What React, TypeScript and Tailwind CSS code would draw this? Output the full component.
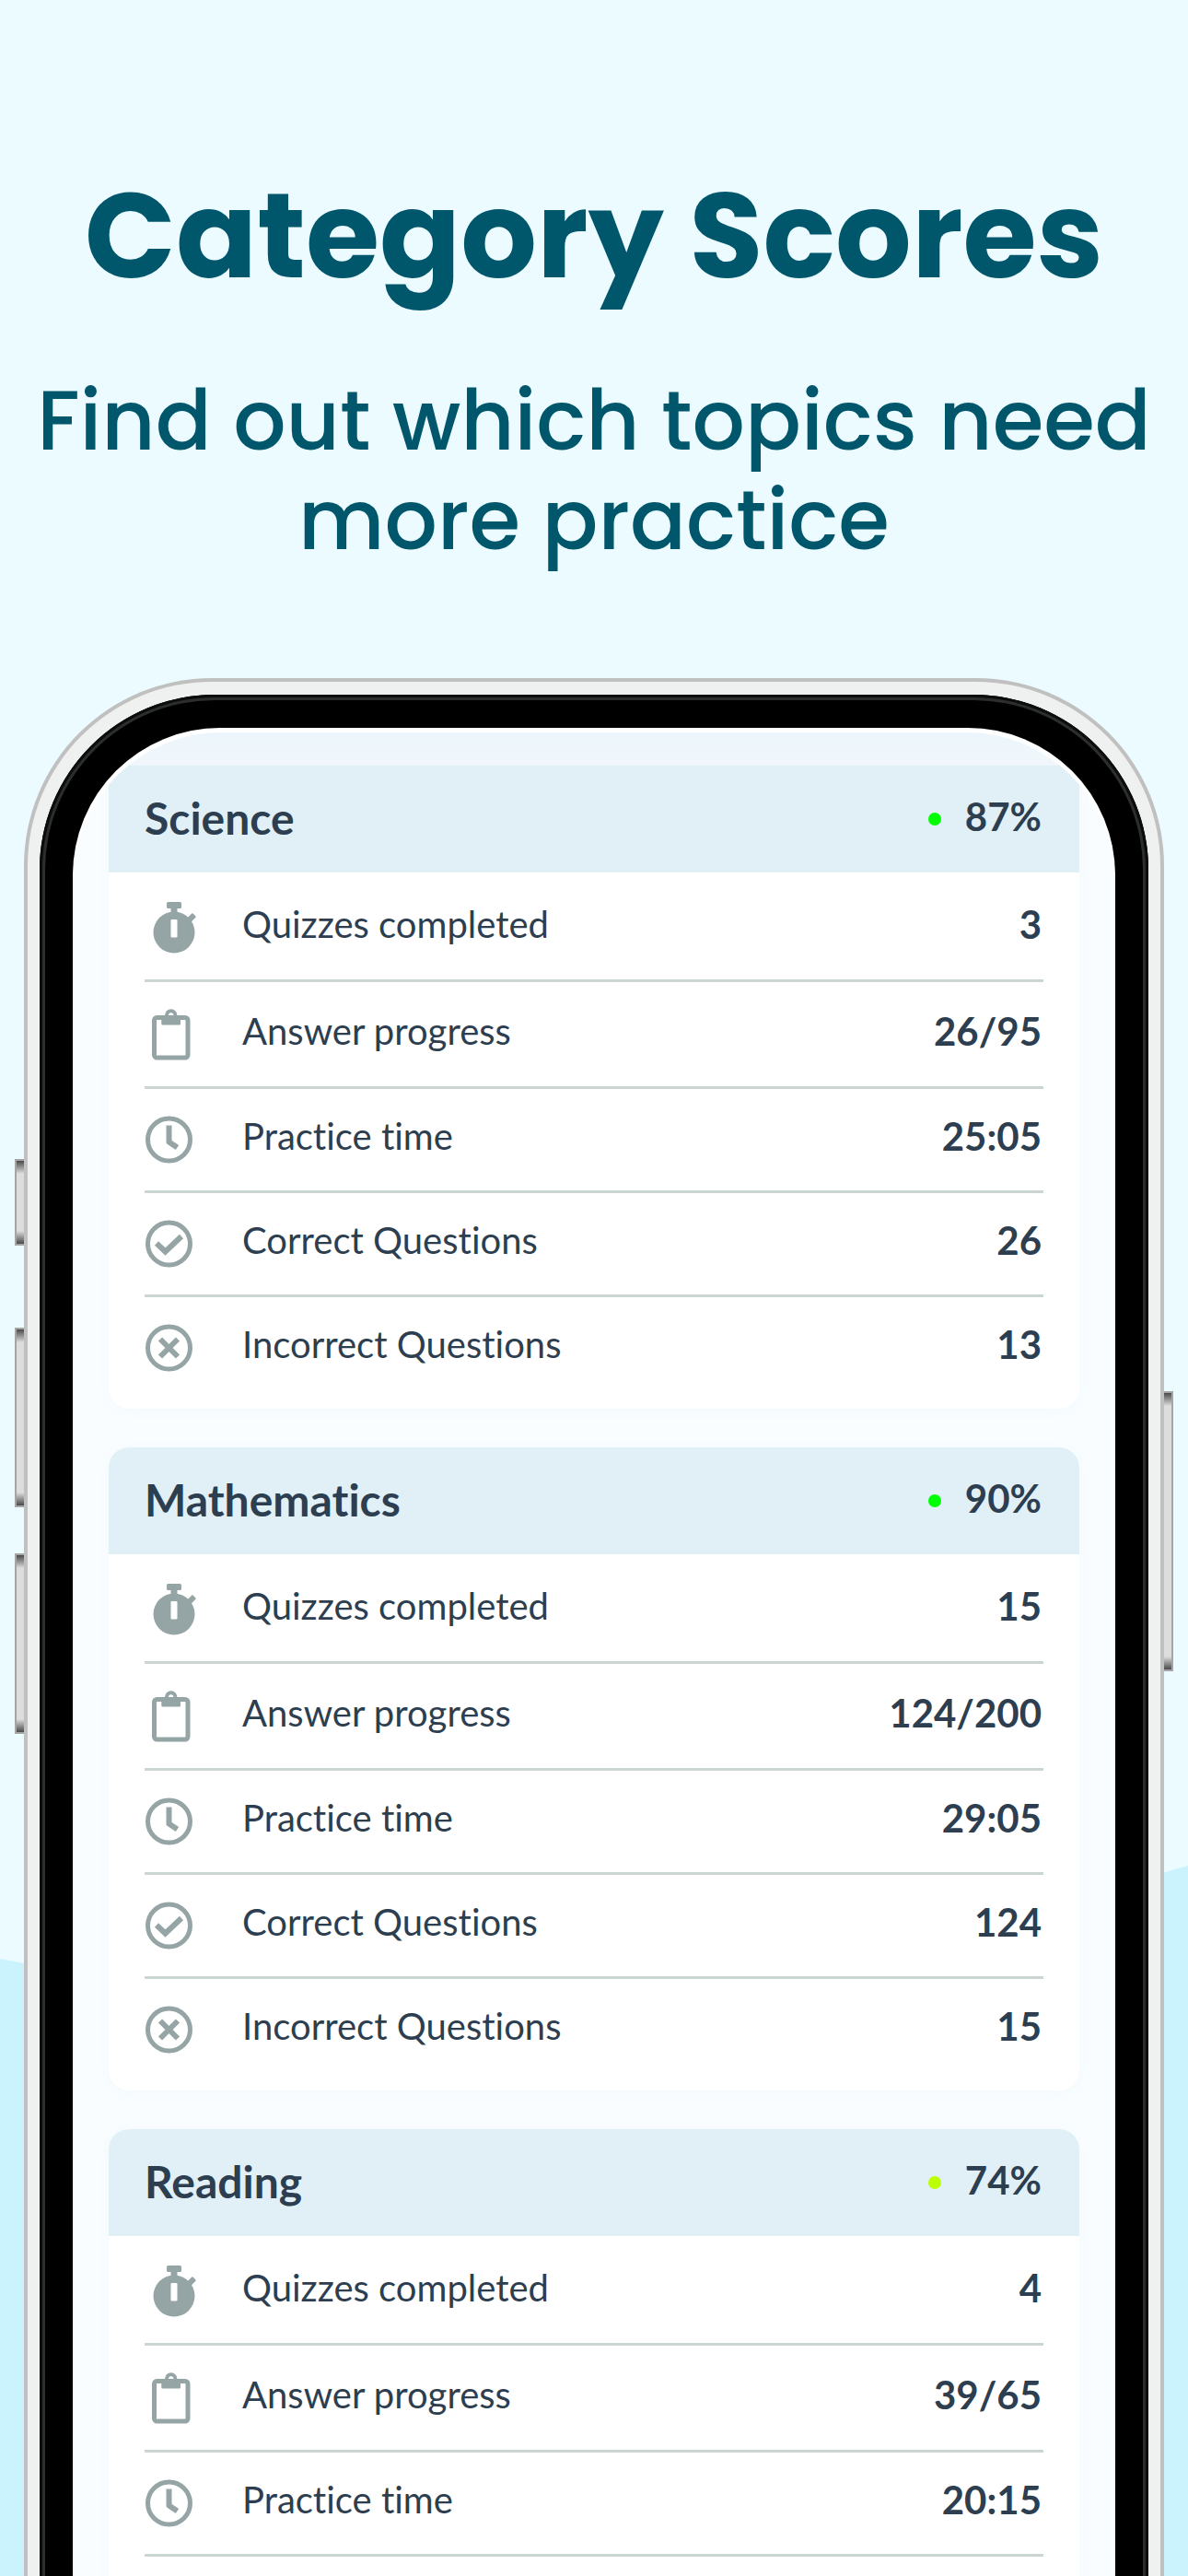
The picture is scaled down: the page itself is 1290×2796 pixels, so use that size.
import clsx from "clsx";

type StatKind = "quizzes" | "progress" | "time" | "correct" | "incorrect";

interface Stat {
  kind: StatKind;
  value: string;
}

interface Category {
  name: string;
  score: string;
  dot: string;
  stats: Stat[];
}

const LABELS: Record<StatKind, string> = {
  quizzes: "Quizzes completed",
  progress: "Answer progress",
  time: "Practice time",
  correct: "Correct Questions",
  incorrect: "Incorrect Questions",
};

const CATEGORIES: Category[] = [
  {
    name: "Science",
    score: "87%",
    dot: "bg-[#00ff00]",
    stats: [
      { kind: "quizzes", value: "3" },
      { kind: "progress", value: "26/95" },
      { kind: "time", value: "25:05" },
      { kind: "correct", value: "26" },
      { kind: "incorrect", value: "13" },
    ],
  },
  {
    name: "Mathematics",
    score: "90%",
    dot: "bg-[#00ff00]",
    stats: [
      { kind: "quizzes", value: "15" },
      { kind: "progress", value: "124/200" },
      { kind: "time", value: "29:05" },
      { kind: "correct", value: "124" },
      { kind: "incorrect", value: "15" },
    ],
  },
  {
    name: "Reading",
    score: "74%",
    dot: "bg-[#bbff00]",
    stats: [
      { kind: "quizzes", value: "4" },
      { kind: "progress", value: "39/65" },
      { kind: "time", value: "20:15" },
    ],
  },
];

function StatIcon({ kind }: { kind: StatKind }) {
  return (
    <svg
      viewBox="0 0 60 60"
      className="h-[60px] w-[60px] shrink-0 text-[#95a5a6]"
      fill="none"
      stroke="currentColor"
      strokeWidth="5"
      aria-hidden="true"
    >
      {kind === "quizzes" && (
        <g fill="currentColor" stroke="none">
          <rect x="24" y="2" width="16" height="7" rx="1.5" />
          <rect x="28.5" y="7" width="7" height="8" />
          <rect x="47.5" y="14.5" width="6" height="10" rx="1" transform="rotate(45 50.5 19.5)" />
          <path
            fillRule="evenodd"
            d="M32 12.5a22.5 22.5 0 1 0 0 45a22.5 22.5 0 1 0 0-45ZM29.5 21h5a1 1 0 0 1 1 1v17.500a1 1 0 0 1-1 1h-5a1 1 0 0 1-1-1V22a1 1 0 0 1 1-1Z"
          />
        </g>
      )}
      {kind === "progress" && (
        <>
          <rect x="10.500" y="11.500" width="36.500" height="43.500" rx="3" />
          <path
            fill="currentColor"
            stroke="none"
            fillRule="evenodd"
            d="M22 9a6.700 6.700 0 0 1 13.400 0L39 9.500V18.500a1 1 0 0 1-1 1H19.300a1 1 0 0 1-1-1V9.500ZM28.700 6.300a2.700 2.700 0 1 0 0 5.400a2.700 2.700 0 1 0 0-5.400Z"
          />
        </>
      )}
      {(kind === "time" || kind === "correct" || kind === "incorrect") && (
        <circle cx="26.500" cy="30" r="23" />
      )}
      {kind === "time" && <path d="M26.500 14.500V32.500L35.500 38.500" strokeWidth="6" strokeLinejoin="round" />}
      {kind === "correct" && <path d="M13 29.500L22.500 38.500L40 22" strokeWidth="6" />}
      {kind === "incorrect" && (
        <path d="M17 20.500L36 39.500M36 20.500L17 39.500" strokeWidth="6" />
      )}
    </svg>
  );
}

function StatRow({ kind, value }: Stat) {
  const tall = kind === "quizzes" || kind === "progress";
  return (
    <div
      className={clsx(
        "flex items-center border-b-[3px]",
        tall ? "h-[116px]" : "h-[113px]",
        kind === "incorrect" ? "border-transparent" : "border-[#cbd5d4]",
      )}
    >
      <StatIcon kind={kind} />
      <dt className="grow pb-2 pl-[46px] text-[40px] leading-[48px]">{LABELS[kind]}</dt>
      <dd className="pr-0.5 pb-2 text-[42px] leading-[50px] font-bold">{value}</dd>
    </div>
  );
}

function CategoryCard({ category, first, last }: { category: Category; first: boolean; last: boolean }) {
  return (
    <section
      className={clsx(
        "overflow-hidden bg-white shadow-[0_2px_14px_rgba(200,225,240,0.12)]",
        !first && "rounded-t-[22px]",
        last ? "grow" : "rounded-b-[22px]",
      )}
    >
      <header className="flex h-[116px] items-center justify-between bg-[#e1f0f7] px-[39px]">
        <h2 className="pb-0.5 text-[48px] leading-[56px] font-bold">{category.name}</h2>
        <div className="flex items-center gap-[26px] pr-0.5">
          <span className={clsx("h-3.5 w-3.5 rounded-full", category.dot)} />
          <span className="pb-1.5 text-[42px] leading-[50px] font-bold">{category.score}</span>
        </div>
      </header>
      <dl className="px-[39px] pt-[3px] pb-2">
        {category.stats.map((s) => (
          <StatRow key={s.kind} {...s} />
        ))}
      </dl>
    </section>
  );
}

function SideButton({ className }: { className: string }) {
  return (
    <span
      className={clsx(
        "absolute w-2.5 border-y-2 border-[#a5a5a5] bg-[linear-gradient(to_bottom,#4a4a4a,#dddddd_14px,#dddddd_calc(100%-14px),#4a4a4a)]",
        className,
      )}
    />
  );
}

export default function App() {
  return (
    <main className="relative flex h-screen flex-col overflow-hidden bg-[#ebfbff] font-[Lato,sans-serif] text-[#2c3e50] [font-variant-ligatures:none]">
      <svg
        className="absolute inset-x-0 bottom-0 h-[780px] w-full"
        viewBox="0 0 1290 780"
        preserveAspectRatio="none"
        aria-hidden="true"
      >
        <path d="M0 110C400 190 860 150 1264 16.500L1290 9V780H0Z" fill="#cbf3fe" />
      </svg>

      <div className="relative pt-[179px] text-center font-[Poppins,Inter,sans-serif] text-[#00566b]">
        <h1 className="text-[130px] leading-[154px] font-bold">Category Scores</h1>
        <p className="mt-[70px] px-6 text-[90px] leading-[108px] font-medium">
          Find out which topics need more practice
        </p>
      </div>

      <div className="relative mx-[26px] mt-[117px] flex grow flex-col rounded-t-[204px] border-4 border-b-0 border-[#c0c0c0] bg-[#eff1f0] px-[13px] pt-3.5">
        <SideButton className="top-[518px] -left-3.5 h-[94px] border-l-2" />
        <SideButton className="top-[701px] -left-3.5 h-[195px] border-l-2" />
        <SideButton className="top-[946px] -left-3.5 h-[196px] border-l-2" />
        <SideButton className="top-[770px] -right-3.5 h-[304px] border-r-2" />

        {/* the bezel runs past the bottom edge so its inner ring stays open there */}
        <div className="-mb-3 flex grow flex-col rounded-t-[190px] bg-black px-9 pt-9 shadow-[inset_0_0_0_3px_#0b0d0c,inset_0_0_0_6px_#2c2e2d]">
          <div className="flex grow flex-col overflow-hidden rounded-t-[160px] bg-white pt-[5px]">
            <div className="flex grow flex-col overflow-hidden rounded-t-[162px] bg-[#f9fdff]">
              <div className="h-9 bg-linear-to-b from-[#ebf5fb] to-[#f2f8fc]" />
              <div className="flex grow flex-col gap-[42px] px-[39px]">
                {CATEGORIES.map((c, i) => (
                  <CategoryCard
                    key={c.name}
                    category={c}
                    first={i === 0}
                    last={i === CATEGORIES.length - 1}
                  />
                ))}
              </div>
            </div>
          </div>
        </div>
      </div>
    </main>
  );
}
